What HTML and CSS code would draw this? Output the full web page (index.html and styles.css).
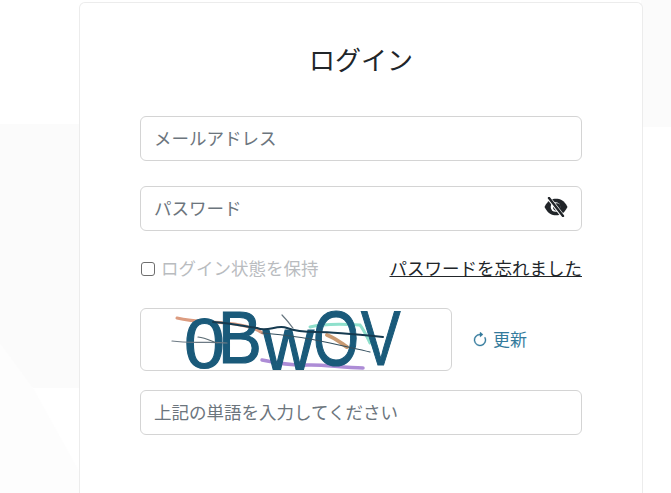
FILE: index.html
```html
<!DOCTYPE html>
<html lang="ja">
<head>
<meta charset="utf-8">
<title>ログイン</title>
<link rel="stylesheet" href="styles.css">
</head>
<body>
<div class="bg-band bg-left"></div>
<div class="bg-band bg-right"></div>
<svg class="bg-shape" width="80" height="150" viewBox="0 0 80 150"><polygon points="0,0 33,45 80,130 80,150 0,150" fill="#fdfdfd"/></svg>
<main class="card">
  <h1 class="title">ログイン</h1>
  <form class="form">
    <input class="field" type="text" placeholder="メールアドレス">
    <div class="password">
      <input class="field" type="password" placeholder="パスワード">
      <svg class="eye" width="24" height="20" viewBox="0 0 24 20">
        <path fill="#212529" d="M.5 10C4 3 8 1.800 12 1.800S20 3 23.500 10C20 17 16 18.200 12 18.200S4 17 .5 10z"/>
        <circle cx="11.500" cy="10" r="4.800" fill="#fff"/>
        <circle cx="12.800" cy="10" r="3.800" fill="#212529"/>
        <path stroke="#fff" stroke-width="4" d="M4 0l15.500 20"/>
        <path stroke="#212529" stroke-width="2.400" stroke-linecap="round" d="M5 1l14 18"/>
      </svg>
    </div>
    <div class="options">
      <label class="remember"><input class="check" type="checkbox"><span>ログイン状態を保持</span></label>
      <a class="forgot" href="#">パスワードを忘れました</a>
    </div>
    <div class="captcha-row">
      <div class="captcha">
        <svg width="310" height="61" viewBox="0 0 310 61">
          <g fill="none" stroke-linecap="round">
            <path d="M36 9c20 5 42 3 63 7s15 5 23 8" stroke="#dc9c80" stroke-width="3"/>
            <path d="M186 26c8 3 14 8 20 12" stroke="#c99a72" stroke-width="4"/>
            <path d="M169 18c16-4 34-3 50-2 4 5 7 12 10 18" stroke="#8fe0cc" stroke-width="3"/>
            <path d="M121 51c15 3 30 6 45 5s36 3 56 3" stroke="#ad8cd6" stroke-width="3.500"/>
          </g>
          <g class="captcha-text">
            <text transform="translate(43 59) scale(2.300 2.200)">0</text>
            <text transform="translate(77 54) scale(2.050 2.300)">B</text>
            <text transform="translate(122 61) scale(2.200 2.400)">w</text>
            <text transform="translate(172 56) scale(1.850 2.450)">O</text>
            <text transform="translate(220 56) scale(1.850 2.450)">V</text>
          </g>
          <g fill="none" stroke-linecap="round">
            <path d="M31 32c20 3 38 0 55 2" stroke="#6d7a85" stroke-width="1.200"/>
            <path d="M57 28c8 1 13 4 19 6" stroke="#5a6a72" stroke-width="1.200"/>
            <path d="M72 13c15 1 30 4 44 6 10 5 20-4 30 0s20 4 30 4 46 3 66 5" stroke="#153a50" stroke-width="2"/>
            <path d="M141 6c4 4 7 8 11 13" stroke="#66757f" stroke-width="1.200"/>
            <path d="M121 24c24 2 46 5 68 10s28 6 40 9" stroke="#35505f" stroke-width="1.200"/>
          </g>
        </svg>
      </div>
      <a class="refresh" href="#">
        <svg width="16" height="16" viewBox="0 0 16 16" fill="#337a9c" stroke="#337a9c" stroke-width="0.400">
          <path fill-rule="evenodd" d="M8 3a5 5 0 1 0 4.546 2.914.5.5 0 0 1 .908-.417A6 6 0 1 1 8 2v1z"/>
          <path d="M8 4.466V.534a.25.25 0 0 1 .41-.192l2.360 1.966c.12.1.12.284 0 .384L8.410 4.658A.25.25 0 0 1 8 4.466z"/>
        </svg>
        <span>更新</span>
      </a>
    </div>
    <input class="field" type="text" placeholder="上記の単語を入力してください">
  </form>
</main>
</body>
</html>
```
FILE: styles.css
```css
* { box-sizing: border-box; }
html, body { margin: 0; height: 493px; overflow: hidden; }
body {
  background: #fff;
  font-family: "Noto Sans CJK JP", "Noto Sans", sans-serif;
  color: #212529;
  padding-top: 2px;
  position: relative;
}
.bg-band { position: absolute; background: #fbfbfb; }
.bg-left { left: 0; top: 124px; width: 80px; height: 264px; }
.bg-right { right: 0; top: 0; width: 30px; height: 127px; }
.bg-shape { position: absolute; left: 0; top: 343px; }
.card {
  position: relative;
  margin-left: 79px;
  width: 564px;
  height: 491px;
  background: #fff;
  border: 1px solid #ececec;
  border-bottom: 0;
  border-radius: 6px 6px 0 0;
  padding: 0 60px;
}
.title {
  margin: 0;
  padding-top: 38px;
  height: 113px;
  font-size: 26px;
  font-weight: 400;
  line-height: 36px;
  text-align: center;
}
.form { display: flex; flex-direction: column; }
.field {
  display: block;
  width: 100%;
  height: 45px;
  padding: 0 13px 3px;
  border: 1px solid #d4d4d4;
  border-radius: 6px;
  background: #fff;
  font: inherit;
  font-size: 17.500px;
  color: #212529;
  outline: none;
}
.field::placeholder { color: #6c757d; opacity: 1; }
.password { position: relative; margin-top: 25px; }
.eye { position: absolute; right: 14px; top: 11px; }
.options {
  display: flex;
  justify-content: space-between;
  align-items: center;
  margin-top: 26px;
  height: 24px;
  font-size: 17.500px;
  line-height: 24px;
}
.remember { display: flex; align-items: center; gap: 6px; color: #b9bcbf; }
.remember span { padding-bottom: 2px; }
.check {
  appearance: none;
  width: 14px;
  height: 14px;
  margin: 0 0 0 1px;
  border: 1.500px solid #6e6e6e;
  border-radius: 3px;
  background: #fff;
}
.forgot { color: #212529; text-decoration: underline; padding-bottom: 2px; }
.captcha-row { display: flex; align-items: center; margin-top: 27px; }
.captcha {
  width: 312px;
  height: 63px;
  border: 1px solid #d4d4d4;
  border-radius: 6px;
  overflow: hidden;
  background: #fff;
}
.captcha svg { display: block; filter: blur(0.4px); }
.captcha-text text {
  font-family: "Liberation Sans", sans-serif;
  font-size: 32px;
  fill: #1a5a7a;
  stroke: #1a5a7a;
  stroke-width: 0.500px;
}
.refresh {
  display: flex;
  align-items: center;
  gap: 5px;
  margin-left: 20px;
  color: #337a9c;
  font-size: 17px;
  text-decoration: none;
}
.refresh span { padding-bottom: 3px; }
.form > .field:last-child { margin-top: 19px; }
```
